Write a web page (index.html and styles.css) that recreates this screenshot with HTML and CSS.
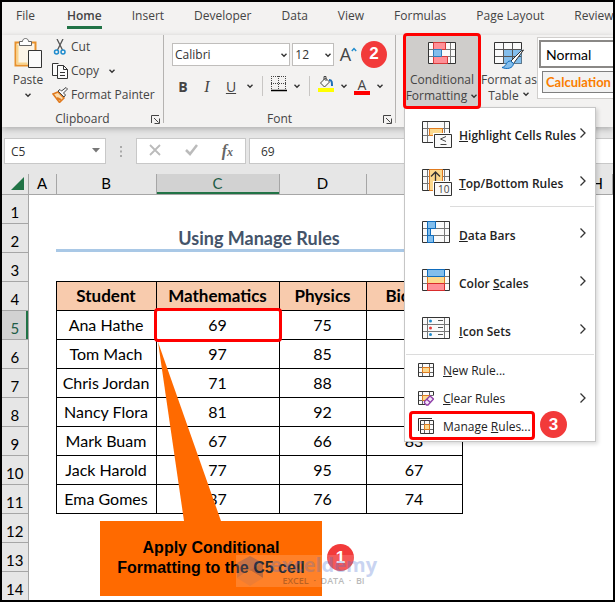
FILE: index.html
```
<!DOCTYPE html>
<html lang="en">
<head>
  <meta charset="UTF-8" />
  <meta name="viewport" content="width=device-width, initial-scale=1" />
  <title>Using Manage Rules</title>
  <link rel="stylesheet" href="styles.css">
</head>
<body>

  <svg class="defs" width="0" height="0">
    <symbol id="chevron" viewBox="0 0 8 8"><path d="M1.5 2.8 4 5.2 6.5 2.8" fill="none" stroke="#333" stroke-width="1.4"/></symbol>
    <symbol id="arrow" viewBox="0 0 8 12"><path d="M1.5 1.5 6 6 1.5 10.500" fill="none" stroke="#333" stroke-width="1.300"/></symbol>
    <symbol id="launcher" viewBox="0 0 9 9"><path d="M.5 8V.5H8M3 3l4.500 4.500M8.500 3.500v5h-5" fill="none" stroke="#444"/></symbol>
    <symbol id="grid" viewBox="0 0 28 22"><path d="M.5.5h27v21H.5z" fill="#fafafa" stroke="#333"/><path d="M1 7.500h26M1 14.500h26M5.500 1v20M22.500 1v20" stroke="#777" fill="none"/></symbol>
  </svg>

  <nav class="tabs">
    <a href="#">File</a>
    <a href="#" class="active">Home</a>
    <a href="#">Insert</a>
    <a href="#">Developer</a>
    <a href="#">Data</a>
    <a href="#">View</a>
    <a href="#">Formulas</a>
    <a href="#">Page Layout</a>
    <a href="#">Review</a>
  </nav>

  <header class="ribbon">
    <section class="group clipboard">
      <div class="group-body">
        <button class="big paste">
          <svg width="28" height="31" viewBox="0 0 28 31">
            <path d="M1.500 4.500h20v23h-20z" fill="#fcf5e8" stroke="#e8912d" stroke-width="2"/>
            <path d="M3.500 6.500v19h10" fill="none" stroke="#f9d58c" stroke-width="2"/>
            <path d="M5.500 7.500v-4h3c0-4 6-4 6 0h3v4z" fill="#fff" stroke="#666"/>
            <path d="M14.500 12.500h13v17h-13z" fill="#fafafa" stroke="#333"/>
          </svg>
          <span>Paste</span>
          <svg width="8" height="8"><use href="#chevron"/></svg>
        </button>
        <div class="stack">
          <button>
            <svg width="16" height="16" viewBox="0 0 16 16">
              <path d="M5 0l5.500 11M11 0 5.500 11" stroke="#555" stroke-width="1.300" fill="none"/>
              <circle cx="4.500" cy="13" r="2" fill="none" stroke="#1e8bcd" stroke-width="1.500"/>
              <circle cx="11" cy="13" r="2" fill="none" stroke="#1e8bcd" stroke-width="1.500"/>
            </svg>
            Cut
          </button>
          <button>
            <svg width="16" height="16" viewBox="0 0 16 16">
              <path d="M6 12.500H.5v-12h6" fill="#fafafa" stroke="#333"/>
              <path d="M5.500 2.500h6l4 4v9h-10z" fill="#fafafa" stroke="#333"/>
              <path d="M11.500 2.500v4h4M8 9.500h5M8 12.500h5" fill="none" stroke="#333"/>
            </svg>
            Copy
            <svg class="gap" width="8" height="8"><use href="#chevron"/></svg>
          </button>
          <button>
            <svg width="16" height="16" viewBox="0 0 16 16">
              <path d="M1 7l5-2 6 6-4.500 4.500z" fill="#fbdcae" stroke="#e07a1f" stroke-width="1.500"/>
              <path d="M5 11l4 2" stroke="#e07a1f" stroke-width="2"/>
              <path d="M6 4l6 6 1.500-2-2-2L15.500 2 14 .5 9.500 4 8 2.500z" fill="#fafafa" stroke="#444"/>
            </svg>
            Format Painter
          </button>
        </div>
      </div>
      <div class="group-label">Clipboard<svg width="9" height="9"><use href="#launcher"/></svg></div>
    </section>

    <section class="group font">
      <div class="group-body">
        <div class="font-row">
          <label class="drop face">
            <select aria-label="Font"><option>Calibri</option></select>
            <svg width="8" height="8"><use href="#chevron"/></svg>
          </label>
          <label class="drop size">
            <select aria-label="Font size"><option>12</option></select>
            <svg width="8" height="8"><use href="#chevron"/></svg>
          </label>
          <button class="grow" aria-label="Increase font size">A<svg width="6" height="5" viewBox="0 0 6 5"><path d="M.8 4 3 1.500 5.200 4" fill="none" stroke="#1e8bcd" stroke-width="1.400"/></svg></button>
          <span class="badge">2</span>
        </div>
        <div class="font-row tools">
          <button class="letter"><b>B</b></button>
          <button class="letter"><i>I</i></button>
          <button class="letter"><u>U</u></button>
          <svg width="8" height="8"><use href="#chevron"/></svg>
          <span class="line"></span>
          <button aria-label="Borders">
            <svg width="16" height="16" viewBox="0 0 16 16"><path d="M0 .5h16M0 7.500h16M.5 0v14M7.500 0v14M14.500 0v14" stroke="#444" stroke-dasharray="1 1" fill="none"/><path d="M0 14.500h16" stroke="#000" stroke-width="1.500"/></svg>
          </button>
          <svg width="8" height="8"><use href="#chevron"/></svg>
          <span class="line"></span>
          <button aria-label="Fill color">
            <svg width="16" height="16" viewBox="0 0 16 16"><path d="M2.500 7 7.500 2l4 4-5 5z" fill="#fafafa" stroke="#444"/><path d="M6 4V.5h2V5" fill="none" stroke="#444"/><path d="M11 4c3 0 3 2 3 6" fill="none" stroke="#1e6fb8" stroke-width="2"/><path d="M0 12h16v4H0z" fill="#ff0"/></svg>
          </button>
          <svg width="8" height="8"><use href="#chevron"/></svg>
          <button class="color">A</button>
          <svg width="8" height="8"><use href="#chevron"/></svg>
        </div>
      </div>
      <div class="group-label">Font<svg width="9" height="9"><use href="#launcher"/></svg></div>
    </section>

    <section class="group styles">
      <div class="conditional">
        <button class="big marked">
          <svg width="28" height="22" viewBox="0 0 28 22">
            <use href="#grid"/>
            <path d="M5.500.5h12v7h-12zM5.500 14.500h14v7h-14z" fill="#ff9097" stroke="#d83b3b"/>
            <path d="M5.500 7.500h8v7h-8z" fill="#83beec" stroke="#2f7fbe"/>
          </svg>
          <span>Conditional</span>
          <span>Formatting <svg width="8" height="8"><use href="#chevron"/></svg></span>
        </button>

        <ul class="menu">
          <li><button class="large">
            <svg width="30" height="28" viewBox="0 0 30 28"><use href="#grid" width="28" height="22"/><path d="M7.500 7.500h13v7h-13z" fill="#fcd98d" stroke="#e07a1f"/><path d="M11 12h19v16H11z" fill="#fff"/><path d="M12.500 13.500h17v13h-17z" fill="#fafafa" stroke="#333"/><path d="M24 15.500l-5.500 2.500 5.500 2.500M18.500 23.500h6" fill="none" stroke="#444"/></svg>
            <span><u>H</u>ighlight Cells Rules</span><svg class="more" width="8" height="12"><use href="#arrow"/></svg></button></li>
          <li><button class="large">
            <svg width="30" height="28" viewBox="0 0 30 28"><use href="#grid" width="28" height="22"/><path d="M7.500.5h13v21h-13z" fill="#fcd98d" stroke="#e07a1f"/><path d="M13.500 14V3M9 7.500 13.500 3 18 7.500" fill="none" stroke="#333" stroke-width="1.300"/><path d="M11 12h19v16H11z" fill="#fff"/><path d="M12.500 13.500h17v13h-17z" fill="#fafafa" stroke="#333"/><text class="ten" x="16" y="24">10</text></svg>
            <span><u>T</u>op/Bottom Rules</span><svg class="more" width="8" height="12"><use href="#arrow"/></svg></button></li>
          <li class="rule inset"></li>
          <li><button class="large">
            <svg width="30" height="28" viewBox="0 0 30 28"><use href="#grid" width="28" height="22"/><path d="M5.500.5h8v7h-8zM5.500 7.500h3v7h-3zM5.500 14.500h6v7h-6z" fill="#83beec" stroke="#0f6cbd"/></svg>
            <span><u>D</u>ata Bars</span><svg class="more" width="8" height="12"><use href="#arrow"/></svg></button></li>
          <li><button class="large">
            <svg width="30" height="28" viewBox="0 0 30 28"><use href="#grid" width="28" height="22"/><path d="M5.500 7.500h17v7h-17z" fill="#fcd98d" stroke="#e07a1f"/><path d="M5.500.5h17v7h-17z" fill="#83beec" stroke="#0f6cbd"/><path d="M5.500 14.500h17v7h-17z" fill="#ff9097" stroke="#d92c2c"/></svg>
            <span>Color <u>S</u>cales</span><svg class="more" width="8" height="12"><use href="#arrow"/></svg></button></li>
          <li><button class="large">
            <svg width="30" height="28" viewBox="0 0 30 28"><use href="#grid" width="28" height="22"/><circle cx="8.500" cy="4" r="1.500" fill="#1e8bcd"/><circle cx="8.500" cy="11" r="1.500" fill="#e83b3b"/><circle cx="8.500" cy="17.500" r="1.500" fill="#1e8bcd"/><path d="M16 3.500h5M16 10.500h5M16 17.500h5" stroke="#555"/></svg>
            <span><u>I</u>con Sets</span><svg class="more" width="8" height="12"><use href="#arrow"/></svg></button></li>
          <li class="rule"></li>
          <li><button>
            <svg width="16" height="16" viewBox="0 0 16 16"><path d="M.5 1.500h15v13H.5z" fill="#fafafa" stroke="#333"/><path d="M4.500 2v12M11.500 2v12M1 5.500h14M1 10.500h14" stroke="#666"/><path d="M4.500 5.500h7v5h-7z" fill="#fcd98d" stroke="#e07a1f"/></svg>
            <span><u>N</u>ew Rule...</span></button></li>
          <li><button>
            <svg width="16" height="16" viewBox="0 0 16 16"><path d="M.5 1.500h15v13H.5z" fill="#fafafa" stroke="#333"/><path d="M4.500 2v12M11.500 2v12M1 5.500h14M1 10.500h14" stroke="#666"/><path d="M4.500 5.500h7v5h-7z" fill="#fcd98d" stroke="#e07a1f"/><path d="M6 16h10V5z" fill="#fff"/><path d="M6.500 11.500 12 6l3.500 3L10 15H8.500l-2-2zM9 9.500l3.500 3" fill="#f4e6f8" stroke="#8f3fa8" stroke-width="1.300"/></svg>
            <span><u>C</u>lear Rules</span><svg class="more" width="8" height="12"><use href="#arrow"/></svg></button></li>
          <li class="manage"><button>
            <svg width="16" height="16" viewBox="0 0 16 16"><path d="M.5 13V.5H14" fill="none" stroke="#333"/><path d="M2.500 2.500h13v13h-13z" fill="#fafafa" stroke="#333"/><path d="M6.500 3v12M11.500 3v12M3 6.500h12M3 11.500h12" stroke="#666"/><path d="M6.500 6.500h5v5h-5z" fill="#fcd98d" stroke="#e07a1f"/></svg>
            <span>Manage <u>R</u>ules...</span></button><span class="badge">3</span></li>
        </ul>
      </div>

      <button class="big">
        <svg width="30" height="28" viewBox="0 0 30 28">
          <path d="M.5.500h27v21H.5z" fill="#fafafa" stroke="#333"/>
          <path d="M9.500 7.500h18v14h-18z" fill="#83beec"/>
          <path d="M1 7.500h26M1 14.500h26M9.500 1v20M18.500 1v20" stroke="#555"/>
          <path d="M27 9 17 19l2.500 2.500L29.500 8z" fill="#fff" stroke="#333"/>
          <path d="M16.500 19c-5 0-3 5-8.500 6.500 5 2 11 1 11.500-4z" fill="#83beec" stroke="#0f6cbd"/>
        </svg>
        <span>Format as</span>
        <span>Table <svg width="8" height="8"><use href="#chevron"/></svg></span>
      </button>

      <div class="gallery">
        <button class="normal">Normal</button>
        <button class="calc">Calculation</button>
      </div>
    </section>
  </header>

  <div class="formula-bar">
    <label class="name-box"><input aria-label="Name box" value="C5"><svg width="8" height="5" viewBox="0 0 8 5"><path d="M0 0h8L4 4.500z" fill="#777"/></svg></label>
    <svg class="dots" width="4" height="13" viewBox="0 0 4 13"><path d="M1 1h2v2H1zM1 5.500h2v2H1zM1 10h2v2H1z" fill="#aaa"/></svg>
    <div class="entry">
      <button aria-label="Cancel"><svg width="12" height="12" viewBox="0 0 12 12"><path d="M1 1l10 10M11 1 1 11" stroke="#bbb" stroke-width="1.800"/></svg></button>
      <button aria-label="Enter"><svg width="13" height="12" viewBox="0 0 13 12"><path d="M1 6l4 4 7-9" fill="none" stroke="#bbb" stroke-width="2.500"/></svg></button>
      <button class="fx">f<small>x</small></button>
    </div>
    <input class="value" aria-label="Formula bar" value="69">
  </div>

  <main class="sheet">
    <table>
      <colgroup>
        <col class="num"><col class="a"><col class="b"><col class="c"><col class="d"><col class="e"><col class="f"><col class="f"><col>
      </colgroup>
      <thead>
        <tr><th><svg width="13" height="13" viewBox="0 0 13 13"><path d="M13 0v13H0z" fill="#217346"/></svg></th><th>A</th><th>B</th><th class="current">C</th><th>D</th><th>E</th><th>F</th><th>G</th><th>H</th></tr>
      </thead>
      <tbody>
        <tr><th>1</th><td></td></tr>
        <tr><th>2</th><td></td><td class="title" colspan="4">Using Manage Rules</td></tr>
        <tr><th>3</th><td></td></tr>
        <tr class="data head"><th>4</th><td></td><td>Student</td><td>Mathematics</td><td>Physics</td><td>Biology</td></tr>
        <tr class="data"><th class="current">5</th><td></td><td>Ana Hathe</td><td class="active-cell">69</td><td>75</td><td>79</td></tr>
        <tr class="data"><th>6</th><td></td><td>Tom Mach</td><td>97</td><td>85</td><td>91</td></tr>
        <tr class="data"><th>7</th><td></td><td>Chris Jordan</td><td>71</td><td>88</td><td>78</td></tr>
        <tr class="data"><th>8</th><td></td><td>Nancy Flora</td><td>81</td><td>92</td><td>88</td></tr>
        <tr class="data"><th>9</th><td></td><td>Mark Buam</td><td>67</td><td>66</td><td>83</td></tr>
        <tr class="data"><th>10</th><td></td><td>Jack Harold</td><td>77</td><td>95</td><td>67</td></tr>
        <tr class="data"><th>11</th><td></td><td>Ema Gomes</td><td>87</td><td>76</td><td>74</td></tr>
        <tr><th>12</th><td></td></tr>
        <tr><th>13</th><td></td></tr>
        <tr><th>14</th><td></td></tr>
      </tbody>
    </table>

    <div class="callout">
      <svg width="222" height="179" viewBox="0 0 222 179"><path d="M58 0 121 179H84z" fill="#ff6a00"/></svg>
      <p>Apply Conditional Formatting to the C5 cell</p>
    </div>
    <span class="badge step">1</span>
    <div class="watermark">
      <svg width="28" height="32" viewBox="0 0 28 32"><path d="M14 1 27 8 14 16 1 8z" fill="#6f7fae"/><path d="M1 8v15l13-8z" fill="#a08a98"/><path d="M27 8v15l-13-8z" fill="#5f6b94"/><path d="M1 23l13-7 13 7-13 8z" fill="#d79a80"/></svg>
      <div><strong>exceldemy</strong><small>EXCEL &nbsp;·&nbsp; DATA &nbsp;·&nbsp; BI</small></div>
    </div>
  </main>

</body>
</html>
```
FILE: styles.css
```
* {
  box-sizing: border-box;
}

body {
  margin: 0;
  height: 100vh;
  border: 2px solid #000;
  overflow: hidden;
  display: flex;
  flex-direction: column;
  background: #fff;
  color: #444;
  font-family: "Open Sans", "Noto Sans", sans-serif;
  font-size: 12px;
}

.defs {
  position: absolute;
}

button {
  font: inherit;
  color: inherit;
  background: none;
  border: 0;
  padding: 0;
  white-space: nowrap;
}

svg {
  flex: none;
}

/* Tabs */
.tabs {
  display: flex;
  flex: none;
  gap: 30px;
  height: 33px;
  padding-left: 14px;
  background: #f3f2f1;
}

.tabs a {
  height: 27px;
  line-height: 28px;
  color: #444;
  text-decoration: none;
  white-space: nowrap;
}

.tabs a:first-child {
  margin-right: 2px;
}

.tabs .active {
  font-weight: 600;
  border-bottom: 3px solid #217346;
}

/* Ribbon */
.ribbon {
  display: flex;
  flex: none;
  height: 92px;
  background: #f3f2f1;
  position: relative;
  z-index: 2;
  box-shadow: 0 2px 6px rgba(0,0,0,0.25);
}

.group {
  display: flex;
  flex-direction: column;
  height: 88px;
  border-right: 1px solid #b5b3b1;
}

.group-body {
  display: flex;
  flex: none;
  height: 72px;
}

.group-label {
  position: relative;
  text-align: center;
  line-height: 24px;
}

.group-label svg {
  position: absolute;
  right: 3px;
  top: 8px;
}

.big {
  display: flex;
  flex-direction: column;
  align-items: center;
  line-height: 16px;
}

.clipboard {
  width: 162px;
}

.paste {
  width: 42px;
  margin-left: 5px;
  padding-top: 3px;
  gap: 3px;
}

.stack button {
  display: flex;
  align-items: center;
  gap: 3px;
  height: 24px;
  margin-left: 3px;
  padding-bottom: 1px;
}

.stack .gap {
  margin-left: 6px;
}

/* Font group */
.font {
  width: 232px;
}

.font .group-body {
  flex-direction: column;
  gap: 6px;
  padding: 6px 8px 0;
}

.font-row {
  display: flex;
  align-items: center;
  gap: 2px;
  height: 26px;
}

.drop {
  position: relative;
}

.drop select {
  appearance: none;
  width: 100%;
  height: 23px;
  padding: 0 2px;
  border: 1px solid #c0bebc;
  border-radius: 0;
  background: #fff;
  color: #333;
  font: inherit;
}

.drop svg {
  position: absolute;
  right: 2px;
  top: 8px;
}

.face {
  width: 123px;
}

.size {
  width: 43px;
}

.grow {
  display: flex;
  margin: 0 2px 0 4px;
  font-size: 18px;
  line-height: 20px;
}

.grow svg {
  margin-top: 3px;
}

.badge {
  display: flex;
  align-items: center;
  justify-content: center;
  width: 27px;
  height: 27px;
  border-radius: 50%;
  background: #f23a3a;
  color: #fff;
  font-family: "Liberation Sans", Arial, sans-serif;
  font-size: 17px;
  font-weight: bold;
}

.tools {
  padding-left: 2px;
  gap: 6px;
}

.letter {
  width: 18px;
  font-size: 14px;
}

.letter i {
  font-family: "Liberation Serif", serif;
  font-size: 16px;
}

.line {
  width: 1px;
  height: 20px;
  margin: 0 2px;
  background: #c8c6c4;
}

.color {
  width: 16px;
  height: 17px;
  border-bottom: 4px solid #f00;
  line-height: 13px;
  font-size: 14px;
}

/* Styles group */
.styles {
  flex: 1;
  flex-direction: row;
  gap: 1px;
  min-width: 0;
  padding-left: 7px;
  border-right: 0;
}

.styles > .big {
  width: 54px;
  padding-top: 7px;
}

.styles > .big svg:first-child {
  margin-bottom: 2px;
}

.conditional {
  position: relative;
}

.marked {
  width: 78px;
  height: 76px;
  margin-top: -2px;
  padding-top: 6px;
  border: 3px solid #f00;
  border-radius: 4px;
  background: #cfcdcb;
  position: relative;
  z-index: 1;
}

.marked > svg {
  margin-bottom: 8px;
}

.gallery {
  flex: 1;
  min-width: 0;
  height: 62px;
  margin-top: 2px;
  padding: 2px 0 0 1px;
  border: 1px solid #d0cecc;
  border-right: 0;
  background: #fff;
  overflow: hidden;
}

.gallery button {
  display: block;
  width: 120px;
  text-align: left;
  font-family: Lato, "Open Sans", sans-serif;
  font-size: 14px;
}

.normal {
  height: 28px;
  padding-left: 5px;
  border: 2px solid #8a8886;
  color: #000;
}

.gallery .calc {
  height: 22px;
  margin: 3px 0 0 3px;
  padding-left: 3px;
  border: 1px solid #7f7f7f;
  background: #f2f2f2;
  color: #fa7d00;
  font-size: 13px;
  font-weight: bold;
}

/* Drop-down menu */
.menu {
  position: absolute;
  left: 1px;
  top: 72px;
  width: 192px;
  margin: 0;
  padding: 1px 0 0;
  list-style: none;
  background: #fff;
  border: 1px solid #c6c6c6;
  box-shadow: 2px 2px 4px rgba(0,0,0,0.15);
  color: #222;
}

.menu li {
  position: relative;
}

.menu button {
  display: flex;
  align-items: center;
  gap: 9px;
  width: 100%;
  height: 28px;
  padding: 0 8px 2px 13px;
  text-align: left;
}

.menu .large {
  gap: 7px;
  height: 48px;
  padding: 4px 8px 0 17px;
  font-weight: 600;
}

.more {
  margin-left: auto;
}

/* the arrow sits close to the longest label */
.large .more {
  margin: 0 0 4px -4px;
}

.menu .large span {
  flex: 1;
}

.menu .rule {
  height: 1px;
  margin: 1px 1px 2px;
  background: #dcdcdc;
}

.menu .inset {
  margin-left: 45px;
}

.ten {
  font-size: 10px;
  font-weight: 400;
  fill: #444;
}

.manage::before {
  content: "";
  position: absolute;
  inset: -2px 60px 1px 4px;
  border: 3px solid #f00;
  border-radius: 4px;
}

.manage .badge {
  position: absolute;
  right: 28px;
  top: -2px;
}

/* Formula bar */
.formula-bar {
  display: flex;
  flex: none;
  align-items: center;
  height: 47px;
  padding: 1px 0 0 2px;
  background: #e6e6e6;
}

.formula-bar input {
  height: 26px;
  border: 1px solid #c8c8c8;
  background: #fff;
  color: #333;
  font: inherit;
}

.name-box {
  position: relative;
}

.name-box input {
  width: 102px;
  padding: 0 6px;
}

.name-box svg {
  position: absolute;
  right: 6px;
  top: 10px;
}

.dots {
  margin: 0 13px;
}

.entry {
  display: flex;
  align-items: center;
  justify-content: space-between;
  width: 110px;
  height: 26px;
  padding: 0 12px;
  border: 1px solid #c8c8c8;
  background: #fff;
}

.fx {
  color: #666;
  font-family: "Liberation Serif", serif;
  font-style: italic;
  font-weight: bold;
  font-size: 16px;
}

.fx small {
  font-size: 12px;
}

.formula-bar .value {
  flex: 1;
  min-width: 0;
  margin-left: 3px;
  padding: 0 11px;
  border-right: 0;
}

/* Sheet */
.sheet {
  position: relative;
  flex: 1;
  min-height: 0;
  overflow: hidden;
}

table {
  width: 100%;
  table-layout: fixed;
  border-collapse: collapse;
  color: #000;
  font-family: Lato, "Open Sans", sans-serif;
  font-size: 16px;
}

.num { width: 26px; }
.a { width: 28px; }
.b { width: 100px; }
.c { width: 123px; }
.d { width: 87px; }
.e { width: 96px; }
.f { width: 60px; }

th, td {
  height: 29px;
  padding: 0;
  text-align: center;
  line-height: 20px;
  white-space: nowrap;
}

th {
  background: #e6e6e6;
  border: 1px solid #a6a6a6;
  border-left: 0;
  font-size: 15px;
  font-weight: normal;
}

thead th {
  height: 20px;
  border-top: 0;
  line-height: 19px;
}

thead svg {
  display: block;
  margin-left: 9px;
}

tbody th {
  padding-top: 6px;
}

thead .current {
  background: #d2d2d2;
  color: #215c46;
  box-shadow: inset 0 -2px #217346;
}

tbody .current {
  background: #d2d2d2;
  color: #215c46;
  box-shadow: inset -2px 0 #217346;
}

.title {
  color: #44546a;
  font-size: 18px;
  font-weight: bold;
  box-shadow: inset 0 -3px #a9c8e6;
}

.data td:nth-child(n+3) {
  border: 1px solid #000;
}

.head td:nth-child(n+3) {
  background: #f8cbad;
  font-size: 17px;
  font-weight: bold;
}

.active-cell {
  position: relative;
}

.active-cell::after {
  content: "";
  position: absolute;
  inset: -3px;
  border: 3px solid #f00;
  border-radius: 4px;
}

/* Notes over the sheet */
.callout {
  position: absolute;
  left: 98px;
  top: 168px;
  width: 222px;
}

.callout svg {
  display: block;
}

.callout p {
  margin: 0;
  padding: 17px 8px 18px;
  background: #ff6a00;
  color: #000;
  font-family: "Liberation Sans", Arial, sans-serif;
  font-size: 16px;
  font-weight: bold;
  line-height: 20px;
  text-align: center;
}

.step {
  position: absolute;
  left: 325px;
  top: 370px;
}

.watermark {
  position: absolute;
  left: 234px;
  top: 381px;
  display: flex;
  gap: 6px;
  opacity: 0.4;
  background: rgba(255,255,255,0.4);
}

.watermark strong {
  display: block;
  color: #7b95dd;
  font-size: 20px;
  line-height: 20px;
}

.watermark small {
  display: block;
  color: #555;
  font-size: 9px;
  font-weight: 600;
  line-height: 11px;
  text-align: center;
}
```
